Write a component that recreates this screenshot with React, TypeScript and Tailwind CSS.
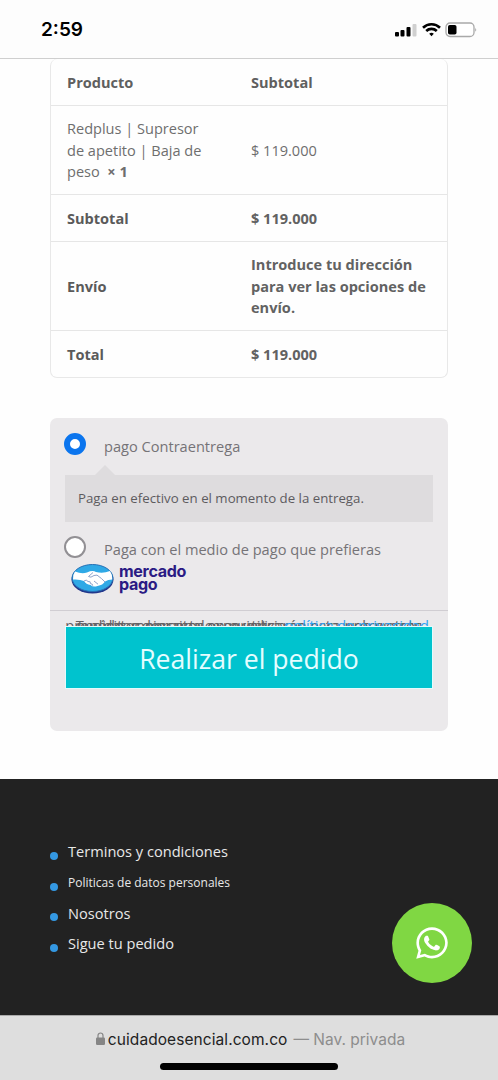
import { FaWhatsapp } from "react-icons/fa";
import { clsx } from "clsx";

const ROWS: { label: string; value: string; height: string }[] = [
  { label: "Subtotal", value: "$ 119.000", height: "h-[47px]" },
  { label: "Envío", value: "Introduce tu dirección para ver las opciones de envío.", height: "h-[89px]" },
  { label: "Total", value: "$ 119.000", height: "h-[47px]" },
];

const LINKS: { label: string; small?: boolean }[] = [
  { label: "Terminos y condiciones" },
  { label: "Politicas de datos personales", small: true },
  { label: "Nosotros" },
  { label: "Sigue tu pedido" },
];

function StatusBar() {
  return (
    <header className="flex h-[59px] shrink-0 items-start justify-between border-b border-[#cfcfcf] bg-[#fdfdfd] pl-[41px] pr-5 pt-[18px] font-['Inter',sans-serif]">
      <span className="text-[19px] font-semibold leading-6 text-black">2:59</span>
      <div className="mt-1 flex items-center gap-1">
        <svg width="24" height="16" viewBox="0 0 24 16">
          <rect x="0" y="10" width="4" height="4.5" rx="1" />
          <rect x="5.5" y="8" width="4" height="6.5" rx="1" />
          <rect x="11.5" y="5" width="4" height="9.5" rx="1" />
          <rect x="17.5" y="2" width="4" height="12.5" rx="1" fill="#d0d0d0" />
        </svg>
        <svg width="19" height="16" viewBox="0 0 19 16" fill="none" stroke="#000" strokeWidth="2.6" className="-ml-px">
          <path d="M1 5.7a12.2 12.2 0 0 1 17 0" />
          <path d="M4.2 9a7.7 7.7 0 0 1 10.6 0" />
          <path d="M9.5 14.2 7.2 11.8a3.4 3.4 0 0 1 4.6 0Z" fill="#000" stroke="none" />
        </svg>
        <svg width="33" height="16" viewBox="0 0 33 16">
          <rect x="1" y="1" width="28" height="13.5" rx="4" fill="#fff" stroke="#a9a9a9" strokeWidth="1.3" />
          <rect x="3" y="3" width="8.5" height="9.5" rx="1.8" />
          <path d="M30.3 5.8q1.8 2 0 4z" fill="#999" />
        </svg>
      </div>
    </header>
  );
}

function OrderTable() {
  return (
    <div className="mx-[50px] rounded-[7px] border border-t-0 border-[#e8e8e8] text-[14.55px] leading-[21.4px] text-[#6e6e6e]">
      <div className="grid h-[46px] grid-cols-[184px_1fr] items-center px-4 pt-0.5 font-bold text-[#5f5f5f]">
        <span>Producto</span>
        <span>Subtotal</span>
      </div>
      <div className="grid h-[89px] grid-cols-[184px_1fr] items-center border-t border-[#e6e6e6] px-4 pt-px">
        <span className="pr-10">
          Redplus | Supresor de apetito | Baja de peso&nbsp; <strong>× 1</strong>
        </span>
        <span>$ 119.000</span>
      </div>
      {ROWS.map((row) => (
        <div
          key={row.label}
          className={clsx("grid grid-cols-[184px_1fr] items-center border-t border-[#e6e6e6] pl-4 pt-px font-bold", row.height)}
        >
          <span className="text-[#5a5a5a]">{row.label}</span>
          <span className="pr-4 text-[#626262]">{row.value}</span>
        </div>
      ))}
    </div>
  );
}

function MercadoPago() {
  return (
    <div className="-mt-px ml-[6px] flex items-center gap-[5px]">
      <svg width="43" height="31" viewBox="0 0 43 31">
        <ellipse cx="21.5" cy="16.6" rx="21" ry="13.9" fill="#23388c" />
        <ellipse cx="21.5" cy="15" rx="20.4" ry="13.5" fill="#2fa9e6" stroke="#2670b5" strokeWidth="1" />
        <path
          d="M4 8.5q7 3 12 1 5.500-2.500 9-.6 7 2 14-1 2.500 3.500 2.300 8.500-4.300 0-7.300 2.100-2 3.500-7.500 4.500-4.500 1.500-7-1-4.500-.5-6.500-4-4.500-2-11-1.500-.5-4.500 2-8z"
          fill="#fff"
        />
        <path
          d="M22 9.500l-4.500 4q2 1.800 5.500-1l3-.4q5 3.500 8 6.900M23 18l4 3.200M13 18q2.500-2 4 .5 3-.5 2.500 2.200 2.500 0 2.200 2"
          fill="none"
          stroke="#8fa3cb"
          strokeWidth="1"
        />
      </svg>
      <div className="pb-[2px] font-['Inter',sans-serif] text-[16.1px] font-bold leading-[13px] tracking-[-0.35px] text-[#2b1b84]">
        <div>mercado</div>
        <div>pago</div>
      </div>
    </div>
  );
}

function Payment() {
  return (
    <section className="mx-[50px] mt-10 h-[313px] shrink-0 rounded-[7px] bg-[#ebe9eb] text-[14.6px] text-[#757377]">
      <div className="flex h-[193px] flex-col border-b border-[#d0cdd2] px-[15px] pt-[15px]">
        <div className="flex h-8 items-start">
          <span className="-ml-px size-[22px] shrink-0 rounded-full border-[6.5px] border-[#0b75ee] bg-white" />
          <span className="ml-[18px] mt-[3px] leading-5">pago Contraentrega</span>
        </div>
        <svg width="20" height="10" viewBox="0 0 20 10" className="ml-[30px]">
          <path d="M0 10 10 0l10 10z" fill="#dedcde" />
        </svg>
        <div className="flex h-[47px] shrink-0 items-center bg-[#dedcde] pl-[13px] text-[13.25px] text-[#5d5b5e]">
          Paga en efectivo en el momento de la entrega.
        </div>
        <div className="mt-[14px] flex h-7 shrink-0 items-start">
          <span className="-ml-px size-[22px] shrink-0 rounded-full border-2 border-[#929094] bg-white" />
          <span className="ml-[18px] mt-[3px] leading-5">Paga con el medio de pago que prefieras</span>
        </div>
        <MercadoPago />
      </div>
      {/* the privacy copy has no line height, so its lines pile up behind the button */}
      <div className="px-[15px]">
        <p className="-mx-1 h-[15px] pt-[14px] text-center text-[14.6px] leading-[0] text-[#626063]">
          Tus datos personales se utilizarán para procesar tu
          <br />
          pedido, mejorar tu experiencia en esta web y otros
          <br />
          propósitos descritos en nuestra <a className="text-[#2ea3f2]">política de privacidad</a>.
        </p>
        <button className="relative h-[63px] w-full border border-[#e3fbfc] bg-[#00c3ce] pt-1 text-[26.6px] leading-none text-[#e4fdff]">
          Realizar el pedido
        </button>
      </div>
    </section>
  );
}

function Footer() {
  return (
    <footer className="relative mt-12 h-[236px] shrink-0 bg-[#222]">
      <ul className="flex flex-col pl-[50px] pt-[58px] text-[14.6px] text-[#e8e8e8]">
        {LINKS.map((link) => (
          <li key={link.label} className="flex h-[30.7px] items-center">
            <span className="mr-[10px] mt-[7px] size-2 rounded-full bg-[#3498e2]" />
            <a className={clsx(link.small && "text-[12px]")}>{link.label}</a>
          </li>
        ))}
      </ul>
      <a className="absolute left-[391.5px] top-[124px] flex size-20 items-center justify-center rounded-full bg-[#80d743]">
        <FaWhatsapp className="size-9 text-white" />
      </a>
    </footer>
  );
}

function BrowserBar() {
  return (
    <div className="flex h-[65px] shrink-0 flex-col items-center border-t border-[#aaa] bg-[#dedede] pt-[14px] font-['Inter',sans-serif]">
      <div className="flex items-center pl-[3px] text-[15.5px] leading-5 text-[#8d8d8d]">
        <svg width="9" height="13" viewBox="0 0 9 13" className="mb-[3px] mr-[3px]">
          <path d="M2 6V3.5a2.5 2.5 0 0 1 5 0V6" fill="none" stroke="#858585" strokeWidth="1.2" />
          <rect x="0" y="5.5" width="9" height="7.5" rx="1.2" fill="#858585" />
        </svg>
        <span className="tracking-[0.07px] text-[#222]">cuidadoesencial.com.co</span>
        <span className="ml-[6px]">— Nav. privada</span>
      </div>
      <div className="mt-[13px] h-[7px] w-[178px] rounded-full bg-black" />
    </div>
  );
}

export default function App() {
  return (
    <div className="flex h-[1080px] w-[498px] flex-col overflow-hidden bg-[#fefefe] font-['Open_Sans',sans-serif]">
      <StatusBar />
      <OrderTable />
      <Payment />
      <Footer />
      <BrowserBar />
    </div>
  );
}
